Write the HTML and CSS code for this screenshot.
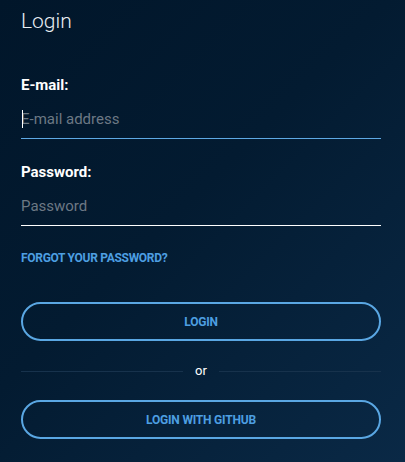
FILE: index.html
```html
<!DOCTYPE html>
<html lang="en">
<head>
<meta charset="utf-8">
<title>Login</title>
<link rel="stylesheet" href="styles.css">
</head>
<body>
<main class="login">
  <h1 class="login__title">Login</h1>
  <form class="login__form">
    <div class="field">
      <label class="field__label" for="email">E-mail:</label>
      <div class="field__control field__control--focus">
        <span class="field__caret"></span>
        <input class="field__input" id="email" type="email" placeholder="E-mail address">
      </div>
    </div>
    <div class="field">
      <label class="field__label" for="password">Password:</label>
      <div class="field__control">
        <input class="field__input" id="password" type="password" placeholder="Password">
      </div>
    </div>
    <a class="login__forgot" href="#">Forgot your password?</a>
    <button class="btn" type="button">Login</button>
    <div class="divider"><span class="divider__text">or</span></div>
    <button class="btn" type="button">Login with GitHub</button>
  </form>
</main>
</body>
</html>
```
FILE: styles.css
```css
html, body {
  margin: 0;
  height: 100%;
}
body {
  background: linear-gradient(135deg, #01162a 0%, #031b31 45%, #0a2946 100%);
  font-family: Roboto, "Noto Sans", sans-serif;
  color: #ffffff;
}
.login {
  width: 360px;
  padding: 8px 0 0 21px;
}
.login__title {
  margin: 0;
  font-size: 21px;
  font-weight: 300;
  line-height: 26px;
  color: #e9eef3;
}
.login__form {
  display: flex;
  flex-direction: column;
  margin-top: 42px;
}
.field {
  display: flex;
  flex-direction: column;
  margin-bottom: 24px;
}
.field__label {
  font-size: 15px;
  font-weight: 700;
  line-height: 18px;
}
.field__control {
  position: relative;
  margin-top: 16px;
  border-bottom: 1px solid #ffffff;
  padding-bottom: 10px;
}
.field__control--focus {
  border-bottom-color: #5ea9e4;
}
.field__input {
  display: block;
  width: 100%;
  box-sizing: border-box;
  padding: 0;
  border: 0;
  background: transparent;
  font-family: inherit;
  font-size: 15px;
  line-height: 18px;
  color: #ffffff;
  outline: none;
}
.field__input::placeholder {
  color: #6c7884;
}
.field__caret {
  position: absolute;
  left: 1px;
  top: 0;
  width: 1px;
  height: 18px;
  background: #ffffff;
}
.login__forgot {
  margin-top: 1px;
  font-size: 12px;
  font-weight: 700;
  line-height: 14px;
  letter-spacing: -0.3px;
  text-transform: uppercase;
  color: #4d9fe2;
  text-decoration: none;
  align-self: flex-start;
}
.btn {
  height: 39px;
  margin-top: 37px;
  border: 2px solid #5aa7e3;
  border-radius: 20px;
  background: transparent;
  font-family: inherit;
  font-size: 12px;
  font-weight: 700;
  letter-spacing: -0.2px;
  text-transform: uppercase;
  color: #4d9fe2;
  cursor: pointer;
}
.divider {
  display: flex;
  align-items: center;
  gap: 12px;
  margin-top: 21px;
  height: 18px;
}
.divider::before,
.divider::after {
  content: "";
  flex: 1;
  height: 1px;
  background: #17324c;
}
.divider__text {
  font-size: 13px;
  line-height: 18px;
  color: #ffffff;
}
.divider + .btn {
  margin-top: 20px;
}
```
